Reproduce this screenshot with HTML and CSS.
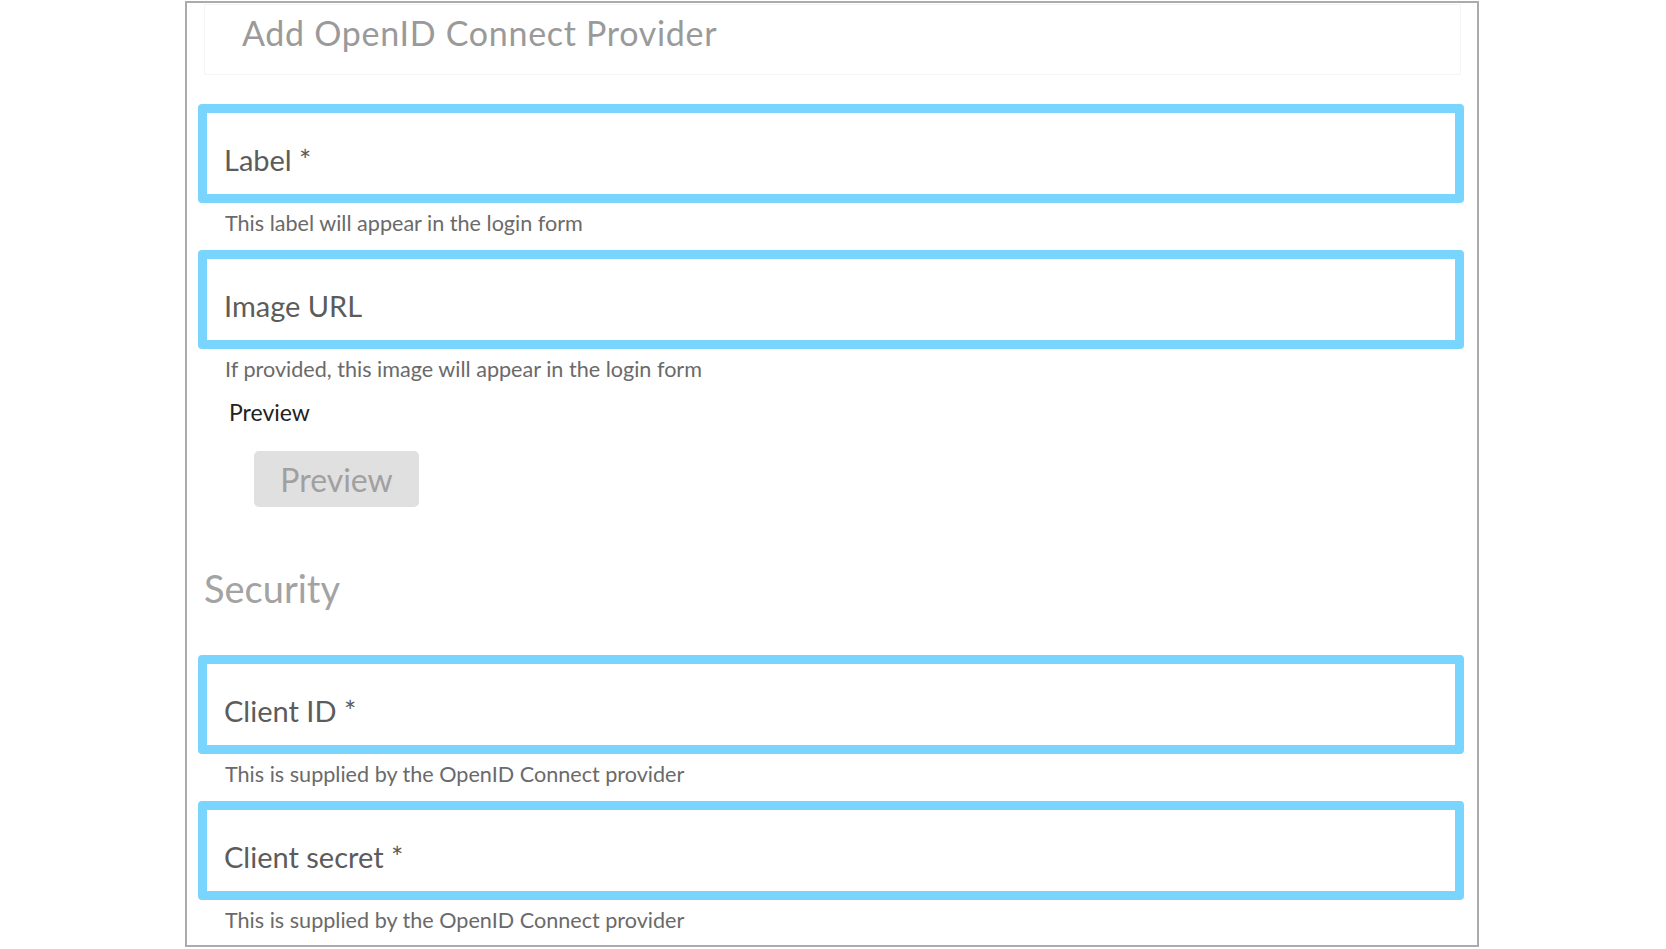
FILE: index.html
```html
<!DOCTYPE html>
<html lang="en">
<head>
<meta charset="utf-8">
<title>Add OpenID Connect Provider</title>
<link rel="stylesheet" href="styles.css">
</head>
<body>
<div class="frame">
  <div class="header">
    <h1 class="title">Add OpenID Connect Provider</h1>
  </div>

  <div class="field field-first">
    <div class="box"><span class="box-label">Label *</span></div>
    <div class="helper">This label will appear in the login form</div>
  </div>

  <div class="field">
    <div class="box"><span class="box-label">Image URL</span></div>
    <div class="helper">If provided, this image will appear in the login form</div>
  </div>

  <div class="preview-label">Preview</div>
  <div class="preview-row">
    <button class="preview-btn" type="button">Preview</button>
  </div>

  <h2 class="section">Security</h2>

  <div class="field">
    <div class="box"><span class="box-label">Client ID *</span></div>
    <div class="helper">This is supplied by the OpenID Connect provider</div>
  </div>

  <div class="field">
    <div class="box"><span class="box-label">Client secret *</span></div>
    <div class="helper">This is supplied by the OpenID Connect provider</div>
  </div>
</div>
</body>
</html>
```

FILE: styles.css
```css
html, body {
  margin: 0;
  padding: 0;
  background: #ffffff;
}

body {
  font-family: "Lato", "Open Sans", sans-serif;
}

.frame {
  box-sizing: border-box;
  width: 1294px;
  height: 946px;
  margin: 1px 0 0 185px;
  border: 2px solid #ababab;
  padding: 0 13px 0 11px;
  overflow: hidden;
}

.header {
  box-sizing: border-box;
  height: 71px;
  margin: 1px 3px 0 6px;
  border: 1px solid #f4f4f4;
  padding: 8px 0 0 37px;
}

.title {
  margin: 0;
  font-size: 34px;
  line-height: 40px;
  font-weight: 400;
  letter-spacing: 0.7px;
  color: #9a9a9a;
}

.field-first {
  margin-top: 29px;
}

.box {
  box-sizing: border-box;
  height: 99px;
  border: 9px solid #79d5fe;
  border-radius: 4px;
  padding: 30px 0 0 17px;
}

.box-label {
  display: block;
  font-size: 29px;
  line-height: 34px;
  color: #5c5c5c;
}

.helper {
  box-sizing: border-box;
  height: 47px;
  padding: 8px 0 0 27px;
  font-size: 21.6px;
  line-height: 24px;
  color: #6a6a6a;
}

.preview-label {
  margin: 3px 0 0 31px;
  font-size: 23px;
  line-height: 26px;
  color: #222222;
}

.preview-row {
  padding: 26px 0 0 56px;
}

.preview-btn {
  box-sizing: border-box;
  width: 165px;
  height: 56px;
  border: none;
  border-radius: 5px;
  background: #e0e0e0;
  color: #a0a0a0;
  font-family: inherit;
  font-size: 32px;
  padding: 0;
  cursor: default;
}

.section {
  margin: 59px 0 0 6px;
  font-size: 38px;
  line-height: 44px;
  font-weight: 400;
  color: #a3a3a3;
}

.section + .field {
  margin-top: 45px;
}
```
